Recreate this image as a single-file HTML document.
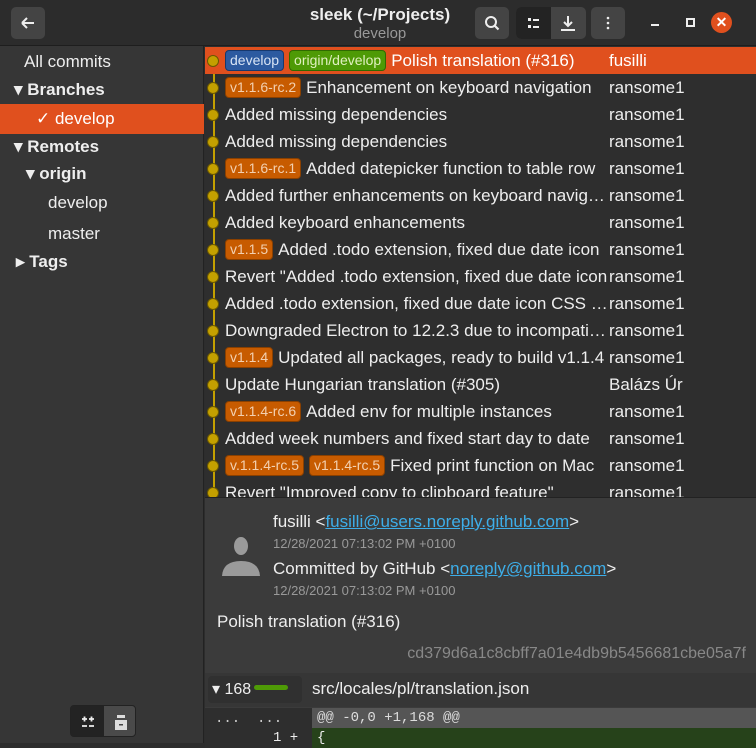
<!DOCTYPE html>
<html><head><meta charset="utf-8"><style>
*{box-sizing:border-box;margin:0;padding:0}
body{width:756px;height:743px;overflow:hidden;background:#2d2d2d;font-family:"Liberation Sans",sans-serif;color:#eee;position:relative;font-size:17px}
.hdr{position:absolute;left:0;top:0;width:756px;height:46px;background:#2c2c2c;border-bottom:1px solid #1e1e1e}
.btn{position:absolute;top:7px;height:32px;background:#444;border-radius:5px}
.side{position:absolute;left:0;top:46px;width:204px;height:697px;background:#363636;border-right:1px solid #222}
.si{position:absolute;left:0;width:204px;height:28px;line-height:28px;font-size:17px}
.list{position:absolute;left:205px;top:46px;width:551px;height:451px;background:#2e2e2e;overflow:hidden}
.row{position:absolute;left:0;width:551px;height:27px;line-height:27px;white-space:nowrap}
.row .m{position:absolute;left:20px;width:384px;overflow:hidden;text-overflow:ellipsis}
.row .a{position:absolute;left:404px}
.dot{position:absolute;left:2px;top:8px;width:12px;height:12px;border-radius:50%;background:#c4a000;border:1px solid #6b5800}
.tag{display:inline-block;height:21px;line-height:19px;padding:0 4px;border-radius:4px;font-size:14px;margin-right:5px;background:#c75b00;color:#f3d0b0;border:1px solid #8a4000;vertical-align:1px}
.det{position:absolute;left:205px;top:497px;width:551px;height:246px;background:#3b3b3b;border-top:1px solid #222}
a{color:#3daee9}
.gray{color:#999;font-size:13px}
</style></head><body>
<div class="hdr">
 <div class="btn" style="left:11px;width:34px"><svg width="34" height="32"><path d="M11 16h12M11 16l5-5M11 16l5 5" stroke="#eee" stroke-width="2" fill="none"/></svg></div>
 <div style="position:absolute;left:280px;top:5px;width:200px;text-align:center;font-weight:bold;font-size:17px">sleek (~/Projects)</div>
 <div style="position:absolute;left:280px;top:25px;width:200px;text-align:center;color:#999;font-size:15px">develop</div>
 <div class="btn" style="left:475px;width:34px"><svg width="34" height="32"><circle cx="16" cy="15" r="5" stroke="#eee" stroke-width="2" fill="none"/><path d="M19.5 18.5l4 4" stroke="#eee" stroke-width="2.2"/></svg></div>
 <div class="btn" style="left:516px;width:70px;background:#444"><div style="position:absolute;left:0;top:0;width:35px;height:32px;background:#232323;border-radius:5px 0 0 5px"></div>
  <svg width="70" height="32" style="position:absolute;left:0;top:0"><rect x="12" y="11" width="3" height="3" fill="#eee"/><rect x="12" y="18" width="3" height="3" fill="#eee"/><rect x="17" y="12" width="6" height="2" fill="#eee"/><rect x="17" y="19" width="6" height="2" fill="#eee"/><path d="M52 9v10M48 15l4 4 4-4" stroke="#eee" stroke-width="2" fill="none"/><rect x="45" y="22" width="14" height="2" fill="#eee"/></svg></div>
 <div class="btn" style="left:591px;width:34px"><svg width="34" height="32"><circle cx="17" cy="11" r="1.3" fill="#eee"/><circle cx="17" cy="16" r="1.3" fill="#eee"/><circle cx="17" cy="21" r="1.3" fill="#eee"/></svg></div>
 <div style="position:absolute;left:651px;top:24px;width:8px;height:2px;background:#eee"></div>
 <div style="position:absolute;left:686px;top:18px;width:9px;height:9px;border:2px solid #eee"></div>
 <div style="position:absolute;left:711px;top:12px;width:21px;height:21px;border-radius:50%;background:#e0501e;color:#fff;text-align:center;line-height:20px;font-size:14px;font-weight:bold">✕</div>
</div>
<div class="side">
 <div class="si" style="top:2px;left:24px">All commits</div>
 <div class="si" style="top:30px;left:14px;font-weight:bold">▾ Branches</div>
 <div class="si" style="top:58px;height:30px;background:#e0501e;color:#fff;padding-left:36px;line-height:30px">✓ develop</div>
 <div class="si" style="top:87px;left:14px;font-weight:bold">▾ Remotes</div>
 <div class="si" style="top:114px;left:26px;font-weight:bold">▾ origin</div>
 <div class="si" style="top:143px;left:48px">develop</div>
 <div class="si" style="top:174px;left:48px">master</div>
 <div class="si" style="top:202px;left:16px;font-weight:bold">▸ Tags</div>
 <div style="position:absolute;left:70px;top:659px;width:66px;height:32px;border-radius:4px;background:#4a4a4a;border:1px solid #222"><div style="position:absolute;left:0;top:0;width:33px;height:30px;background:#232323"></div><svg width="66" height="30" style="position:absolute;left:0;top:0"><path d="M11 13h5M13.5 10.5v5M18 13h5M20.5 10.5v5M11 20h5M18 20h5" stroke="#eee" stroke-width="1.8"/><rect x="44" y="14" width="12" height="10" fill="#ddd"/><rect x="46" y="9" width="8" height="3" fill="#ddd"/><rect x="48" y="18" width="4" height="1.5" fill="#444"/></svg></div>
</div>
<div class="list">
 <div style="position:absolute;left:8px;top:14px;width:2px;height:440px;background:#c4a000"></div>
 <div class="row" style="top:1px;background:#e0501e;color:#fff"><div class="dot"></div><span class="m"><span class="tag" style="background:#2c5aa0;border-color:#16386e;color:#d8e4f5">develop</span><span class="tag" style="background:#4e9a06;border-color:#2f6a00;color:#e0f0c0">origin/develop</span>Polish translation (#316)</span><span class="a">fusilli</span></div>
 <div class="row" style="top:28px"><div class="dot"></div><span class="m"><span class="tag">v1.1.6-rc.2</span>Enhancement on keyboard navigation</span><span class="a">ransome1</span></div>
 <div class="row" style="top:55px"><div class="dot"></div><span class="m">Added missing dependencies</span><span class="a">ransome1</span></div>
 <div class="row" style="top:82px"><div class="dot"></div><span class="m">Added missing dependencies</span><span class="a">ransome1</span></div>
 <div class="row" style="top:109px"><div class="dot"></div><span class="m"><span class="tag">v1.1.6-rc.1</span>Added datepicker function to table row</span><span class="a">ransome1</span></div>
 <div class="row" style="top:136px"><div class="dot"></div><span class="m">Added further enhancements on keyboard navigation</span><span class="a">ransome1</span></div>
 <div class="row" style="top:163px"><div class="dot"></div><span class="m">Added keyboard enhancements</span><span class="a">ransome1</span></div>
 <div class="row" style="top:190px"><div class="dot"></div><span class="m"><span class="tag">v1.1.5</span>Added .todo extension, fixed due date icon</span><span class="a">ransome1</span></div>
 <div class="row" style="top:217px"><div class="dot"></div><span class="m">Revert "Added .todo extension, fixed due date icon</span><span class="a">ransome1</span></div>
 <div class="row" style="top:244px"><div class="dot"></div><span class="m">Added .todo extension, fixed due date icon CSS issue</span><span class="a">ransome1</span></div>
 <div class="row" style="top:271px"><div class="dot"></div><span class="m">Downgraded Electron to 12.2.3 due to incompatibility</span><span class="a">ransome1</span></div>
 <div class="row" style="top:298px"><div class="dot"></div><span class="m"><span class="tag">v1.1.4</span>Updated all packages, ready to build v1.1.4</span><span class="a">ransome1</span></div>
 <div class="row" style="top:325px"><div class="dot"></div><span class="m">Update Hungarian translation (#305)</span><span class="a">Balázs Úr</span></div>
 <div class="row" style="top:352px"><div class="dot"></div><span class="m"><span class="tag">v1.1.4-rc.6</span>Added env for multiple instances</span><span class="a">ransome1</span></div>
 <div class="row" style="top:379px"><div class="dot"></div><span class="m">Added week numbers and fixed start day to date</span><span class="a">ransome1</span></div>
 <div class="row" style="top:406px"><div class="dot"></div><span class="m"><span class="tag">v.1.1.4-rc.5</span><span class="tag">v1.1.4-rc.5</span>Fixed print function on Mac</span><span class="a">ransome1</span></div>
 <div class="row" style="top:433px"><div class="dot"></div><span class="m">Revert "Improved copy to clipboard feature"</span><span class="a">ransome1</span></div>
</div>
<div class="det">
 <svg style="position:absolute;left:16px;top:37px" width="40" height="42"><ellipse cx="20" cy="11" rx="7" ry="9" fill="#9a9a9a"/><path d="M1 41 Q2 26 20 26 Q38 26 39 41z" fill="#9a9a9a"/></svg>
 <div style="position:absolute;left:68px;top:14px">fusilli &lt;<a href="#">fusilli@users.noreply.github.com</a>&gt;</div>
 <div class="gray" style="position:absolute;left:68px;top:38px">12/28/2021 07:13:02 PM +0100</div>
 <div style="position:absolute;left:68px;top:61px">Committed by GitHub &lt;<a href="#">noreply@github.com</a>&gt;</div>
 <div class="gray" style="position:absolute;left:68px;top:85px">12/28/2021 07:13:02 PM +0100</div>
 <div style="position:absolute;left:12px;top:114px">Polish translation (#316)</div>
 <div style="position:absolute;right:10px;top:147px;color:#888;font-size:16px">cd379d6a1c8cbff7a01e4db9b5456681cbe05a7f</div>
 <div style="position:absolute;left:0;top:175px;width:551px;height:34px;background:#363636"></div>
 <div style="position:absolute;left:3px;top:178px;width:94px;height:27px;border-radius:4px;background:#303030;font-size:16px;line-height:27px;padding-left:4px">▾ 168<span style="display:inline-block;width:34px;height:5px;border-radius:3px;background:#4e9a06;margin-left:3px;vertical-align:4px"></span></div>
 <div style="position:absolute;left:107px;top:181px">src/locales/pl/translation.json</div>
 <div style="position:absolute;left:0;top:210px;width:551px;height:40px;background:#2e2e2e;font-family:'Liberation Mono',monospace;font-size:14px">
  <div style="position:absolute;left:10px;top:3px;color:#ccc">...&nbsp;&nbsp;...</div>
  <div style="position:absolute;left:107px;top:0;width:444px;height:20px;background:#555;color:#ddd;padding-left:5px;line-height:20px">@@ -0,0 +1,168 @@</div>
  <div style="position:absolute;left:68px;top:20px;color:#eee;line-height:20px">1 +</div>
  <div style="position:absolute;left:107px;top:20px;width:444px;height:20px;background:#26421a;padding-left:5px;line-height:20px">{</div>
 </div>
</div>
</body></html>
